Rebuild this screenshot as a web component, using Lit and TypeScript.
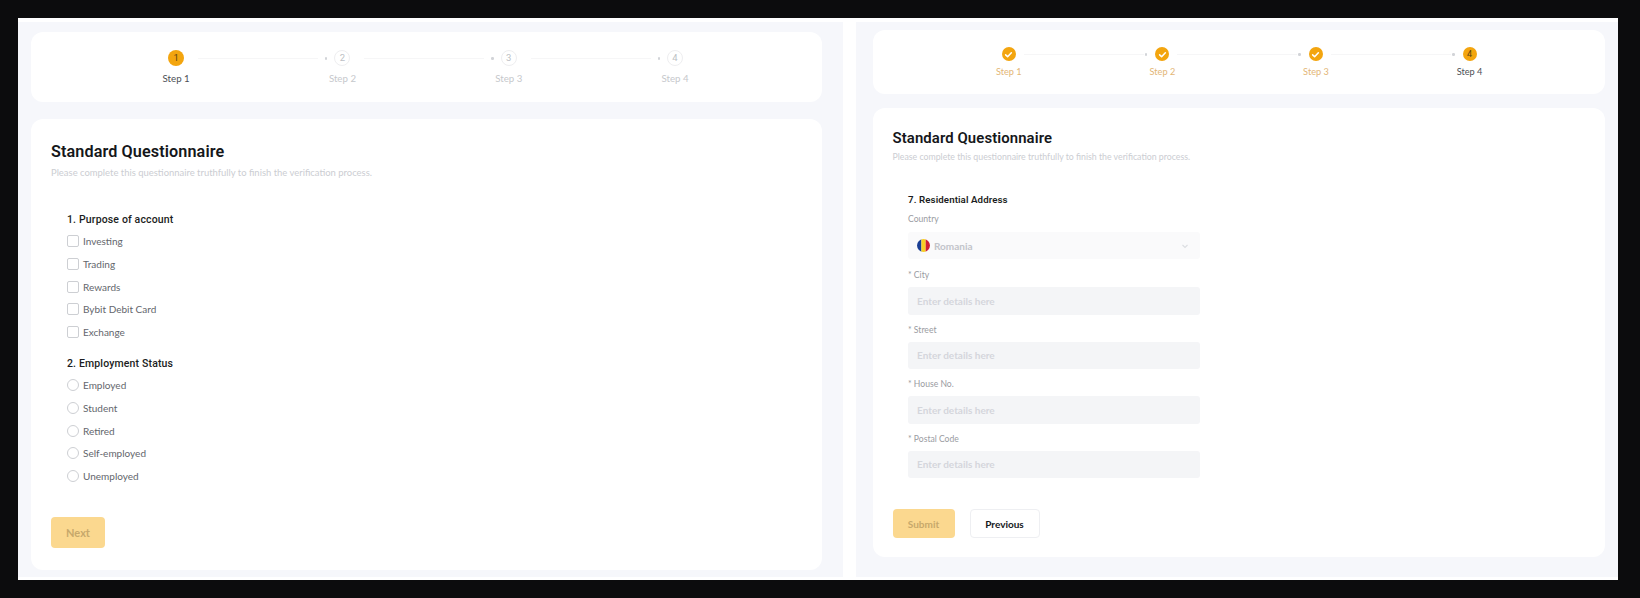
import { LitElement, html, css, nothing } from "lit";
import { customElement } from "lit/decorators.js";

type StepState = "done" | "active" | "todo";

const check = html`<svg class="check" viewBox="0 0 10 10" aria-hidden="true"><path d="M2.4 5.3 4.2 7 7.6 3.4" fill="none" stroke="#fff" stroke-width="1.4" stroke-linecap="round" stroke-linejoin="round"/></svg>`;

const stepper = (states: StepState[], cls: string) => html`
  <div class="card stepper ${cls}">
    ${states.map(
      (s, i) => html`<div class="step ${s}">
        <div class="dot-row">
          ${i > 0 ? html`<span class="tick"></span>` : nothing}
          <span class="circle">${s === "done" ? check : i + 1}</span>
          ${i < 3 ? html`<span class="line"></span>` : nothing}
        </div>
        <div class="step-label">Step ${i + 1}</div>
      </div>`
    )}
  </div>
`;

@customElement("app-root")
export class AppRoot extends LitElement {
  static styles = css`
    :host {
      display: block;
      height: 598px;
      box-sizing: border-box;
      padding: 18px 22px 18px 18px;
      background: #0c0c0d;
      font-family: Lato, "Noto Sans", sans-serif;
      color: #1b1d22;
    }
    * { box-sizing: border-box; }
    .sheet {
      display: flex;
      gap: 13px;
      height: 562px;
      padding: 4px 0 3px;
      background: #fff;
    }
    .panel {
      display: flex;
      flex-direction: column;
      background: #f6f7fb;
    }
    .panel.left { width: 825px; padding: 10px 21px 7px 13px; gap: 17px; }
    .panel.right { width: 762px; padding: 8px 13px 20px 17px; gap: 14px; }
    .card { background: #fff; border-radius: 12px; }

    .stepper { display: grid; flex: none; }
    .stepper.big { height: 70px; padding: 17px 0 0 62px; grid-template-columns: repeat(4, 166.3px); }
    .stepper.small { height: 64px; padding: 15px 0 0 59px; grid-template-columns: repeat(4, 153.6px); }
    .step { display: flex; flex-direction: column; align-items: center; }
    .dot-row {
      position: relative;
      display: flex;
      justify-content: center;
      align-items: center;
      width: 100%;
      height: 18px;
    }
    .circle {
      display: flex;
      align-items: center;
      justify-content: center;
      width: 16px;
      height: 16px;
      border-radius: 50%;
      font-size: 9.5px;
      line-height: 1;
      font-family: Roboto, sans-serif;
    }
    .small .circle { width: 14px; height: 14px; font-size: 9px; }
    .step.active .circle, .step.done .circle { background: #f3a50f; color: #5c4310; }
    .step.todo .circle { border: 1px solid #eeeef0; color: #bcbfc4; background: #fff; }
    .check { width: 11px; height: 11px; }
    .line {
      position: absolute;
      left: calc(50% + 22px);
      width: 120px;
      top: 50%;
      height: 1px;
      background: #f6f6f7;
    }
    .small .line { left: calc(50% + 15px); width: 120px; }
    .tick {
      position: absolute;
      right: calc(50% + 15px);
      top: calc(50% - 1px);
      width: 2.5px;
      height: 2.5px;
      border-radius: 50%;
      background: #d2d4d8;
    }
    .step-label { margin-top: 5px; font-size: 9.7px; line-height: 12px; }
    .small .step-label { margin-top: 3px; font-size: 9.2px; }
    .step.active .step-label { color: #4c4f55; }
    .step.done .step-label { color: #e3b676; }
    .step.todo .step-label { color: #c6c8cc; }

    .form { flex: 1; display: flex; flex-direction: column; align-items: flex-start; }
    .left .form { padding: 23px 20px 0; }
    .right .form { padding: 20px 19.5px 0; }
    h1 { margin: 0; font: 600 16.2px/20px Roboto, sans-serif; color: #15171a; letter-spacing: 0.1px; }
    .right h1 { font-size: 14.9px; }
    .sub { margin: 4.6px 0 0; font-size: 9.45px; line-height: 12px; color: #cbcdd2; }
    .right .sub { margin-top: 3px; font-size: 8.75px; }

    .questions { display: flex; flex-direction: column; margin: 34px 0 0 16px; }
    .q-title { font: 500 10.5px/14px Roboto, sans-serif; color: #1b1d22; letter-spacing: 0.15px; }
    .options { display: flex; flex-direction: column; gap: 9.75px; margin-top: 8px; margin-bottom: 18px; }
    .option { display: flex; align-items: center; gap: 4px; height: 13px; font-size: 10px; color: #63666c; }
    .box { width: 12px; height: 12px; border: 1px solid #cdcfd3; border-radius: 2px; background: #fff; }
    .radio { border-radius: 50%; }

    .btn {
      display: flex;
      align-items: center;
      justify-content: center;
      border-radius: 4px;
      font: 700 10px/1 Lato, sans-serif;
    }
    .btn.primary { background: #fbd88f; color: #c7a86b; }
    .btn.next { width: 54px; height: 31px; margin-top: 16px; font-size: 11px; }
    .actions { display: flex; gap: 15px; margin-top: 22px; }
    .btn.submit { width: 62px; height: 29px; }
    .btn.prev { width: 70px; height: 29px; background: #fff; border: 1px solid #eeeff2; color: #15171a; }

    .address { display: flex; flex-direction: column; margin: 30px 0 0 15.5px; width: 292px; }
    .field-label { font-size: 8.6px; line-height: 12px; color: #9a9ca2; }
    .address .q-title { margin-bottom: 5.5px; font-size: 9.7px; font-weight: 600; letter-spacing: 0.1px; }
    .field { display: flex; flex-direction: column; gap: 6px; margin-bottom: 9px; }
    .field.first { gap: 7.5px; margin-bottom: 10px; }
    .input {
      display: flex;
      align-items: center;
      height: 27.5px;
      padding: 0 9px;
      border-radius: 3px;
      background: #f4f5f7;
      font-size: 10px;
      font-weight: 700;
      color: #d4d6dc;
    }
    .select {
      height: 27px;
      gap: 4px;
      background: #fafafb;
      color: #c2c4ca;
    }
    .flag { width: 13px; height: 13px; flex: none; }
    .chev { width: 8px; height: 8px; margin-left: auto; margin-right: 2px; }
  `;

  render() {
    const boxes = ["Investing", "Trading", "Rewards", "Bybit Debit Card", "Exchange"];
    const radios = ["Employed", "Student", "Retired", "Self-employed", "Unemployed"];
    const fields = ["City", "Street", "House No.", "Postal Code"];
    return html`
      <div class="sheet">
        <section class="panel left">
          ${stepper(["active", "todo", "todo", "todo"], "big")}
          <div class="card form">
            <h1>Standard Questionnaire</h1>
            <p class="sub">Please complete this questionnaire truthfully to finish the verification process.</p>
            <div class="questions">
              <div class="q-title">1. Purpose of account</div>
              <div class="options">
                ${boxes.map((b) => html`<div class="option"><span class="box"></span>${b}</div>`)}
              </div>
              <div class="q-title">2. Employment Status</div>
              <div class="options">
                ${radios.map((r) => html`<div class="option"><span class="box radio"></span>${r}</div>`)}
              </div>
            </div>
            <div class="btn primary next">Next</div>
          </div>
        </section>
        <section class="panel right">
          ${stepper(["done", "done", "done", "active"], "small")}
          <div class="card form">
            <h1>Standard Questionnaire</h1>
            <p class="sub">Please complete this questionnaire truthfully to finish the verification process.</p>
            <div class="address">
              <div class="q-title">7. Residential Address</div>
              <div class="field first">
                <div class="field-label">Country</div>
                <div class="input select">
                  <svg class="flag" viewBox="0 0 13 13" aria-hidden="true">
                    <defs><clipPath id="c"><circle cx="6.5" cy="6.5" r="6.5"/></clipPath></defs>
                    <g clip-path="url(#c)">
                      <rect width="4.4" height="13" fill="#1b3f94"/>
                      <rect x="4.4" width="4.3" height="13" fill="#f7cf24"/>
                      <rect x="8.7" width="4.3" height="13" fill="#cf1f35"/>
                    </g>
                  </svg>
                  Romania
                  <svg class="chev" viewBox="0 0 8 8" aria-hidden="true"><path d="M1.5 3 4 5.5 6.5 3" fill="none" stroke="#dcdee2" stroke-width="1.2"/></svg>
                </div>
              </div>
              ${fields.map(
                (f) => html`<div class="field">
                  <div class="field-label">* ${f}</div>
                  <div class="input">Enter details here</div>
                </div>`
              )}
            </div>
            <div class="actions">
              <div class="btn primary submit">Submit</div>
              <div class="btn prev">Previous</div>
            </div>
          </div>
        </section>
      </div>
    `;
  }
}
